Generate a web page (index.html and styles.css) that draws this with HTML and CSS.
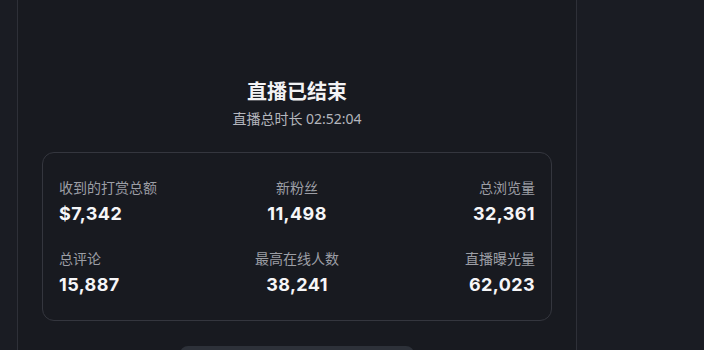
FILE: index.html
```html
<!DOCTYPE html>
<html lang="zh-CN">
<head>
    <meta charset="UTF-8">
    <meta name="viewport" content="width=device-width, initial-scale=1.0">
    <title>直播已结束</title>
    <link rel="stylesheet" href="styles.css">
</head>
<body>
    <div class="page">
        <main class="panel">
            <h1 class="title">直播已结束</h1>
            <p class="duration">直播总时长 02:52:04</p>

            <section class="stats">
                <div class="stat left">
                    <span class="label">收到的打赏总额</span>
                    <span class="value">$7,342</span>
                </div>
                <div class="stat center">
                    <span class="label">新粉丝</span>
                    <span class="value">11,498</span>
                </div>
                <div class="stat right">
                    <span class="label">总浏览量</span>
                    <span class="value">32,361</span>
                </div>
                <div class="stat left">
                    <span class="label">总评论</span>
                    <span class="value">15,887</span>
                </div>
                <div class="stat center">
                    <span class="label">最高在线人数</span>
                    <span class="value">38,241</span>
                </div>
                <div class="stat right">
                    <span class="label">直播曝光量</span>
                    <span class="value">62,023</span>
                </div>
            </section>

            <button class="back-btn" aria-label="返回首页"></button>
        </main>
    </div>
</body>
</html>
```

FILE: styles.css
```css
body {
    margin: 0;
    padding: 0;
    background: #1a1c23;
    color: #f4f4f6;
    font-family: "Noto Sans", "Noto Sans CJK SC", sans-serif;
    overflow: hidden;
}
.page {
    display: flex;
    height: 350px;
    padding-left: 17px;
}
.panel {
    width: 560px;
    flex-shrink: 0;
    border-left: 1px solid #2e3038;
    border-right: 1px solid #2e3038;
    background: #181a20;
    padding: 80px 24px 0;
    box-sizing: border-box;
    display: flex;
    flex-direction: column;
    align-items: center;
    overflow: hidden;
}
.title {
    margin: 0;
    font-size: 20px;
    line-height: 24px;
    font-weight: 700;
    color: #f2f2f4;
}
.duration {
    margin: 5px 0 0;
    font-size: 14px;
    line-height: 20px;
    color: #b4b6bd;
}
.stats {
    margin-top: 23px;
    width: 510px;
    flex-shrink: 0;
    box-sizing: border-box;
    border: 1px solid #34363e;
    border-radius: 12px;
    padding: 25px 16px 23px;
    display: grid;
    grid-template-columns: 1fr 1fr 1fr;
    row-gap: 23px;
}
.stat {
    display: flex;
    flex-direction: column;
    gap: 5px;
}
.stat.left { align-items: flex-start; }
.stat.center { align-items: center; }
.stat.right { align-items: flex-end; }
.label {
    font-size: 14px;
    line-height: 19px;
    color: #9c9ea5;
}
.value {
    font-family: Inter, "Noto Sans", sans-serif;
    font-size: 18px;
    line-height: 24px;
    font-weight: 700;
    color: #f6f6f8;
    letter-spacing: 0.4px;
}
.back-btn {
    margin-top: 25px;
    width: 234px;
    height: 44px;
    flex-shrink: 0;
    border: none;
    border-radius: 8px;
    background: #2d3139;
}
```
